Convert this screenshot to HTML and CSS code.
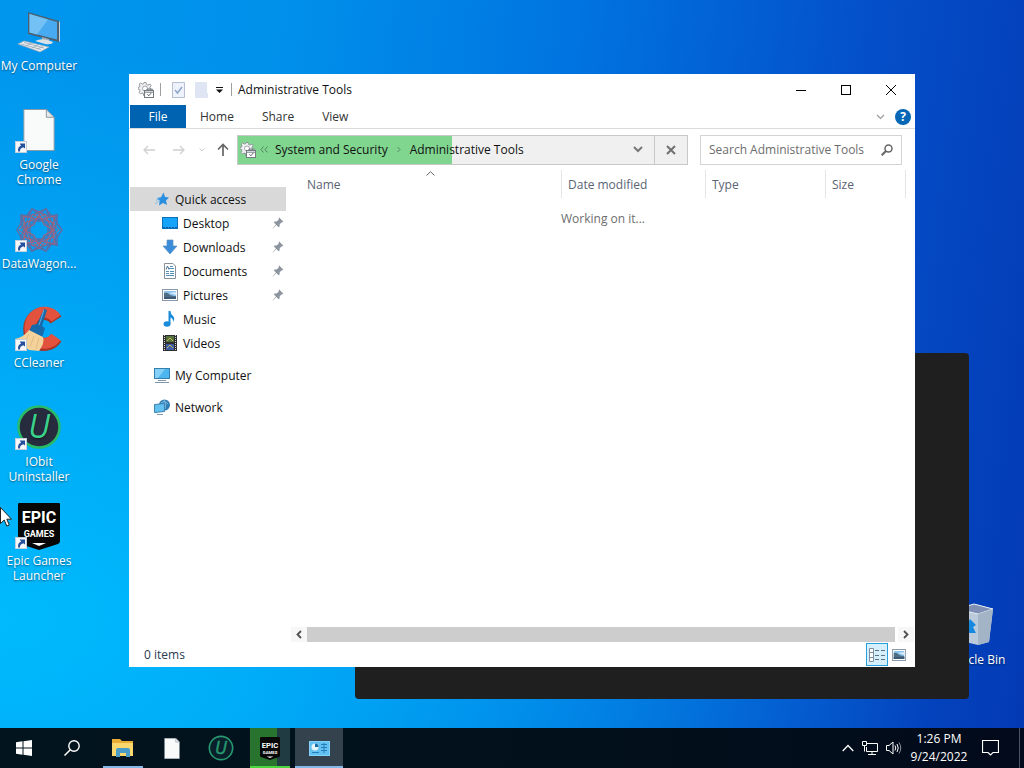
FILE: index.html
```html
<!DOCTYPE html>
<html lang="en">
<head>
    <meta charset="UTF-8">
    <meta name="viewport" content="width=device-width, initial-scale=1.0">
    <title>Administrative Tools</title>
    <link rel="stylesheet" href="styles.css">
</head>
<body>
    <!-- shared icons -->
    <svg class="defs" aria-hidden="true">
        <symbol id="shortcut" viewBox="0 0 12 12">
            <rect x="0.5" y="0.5" width="11" height="11" fill="#f6f8fb" stroke="#c3cfdb"/>
            <path d="M3.2 10.4C2.6 7.4 3.6 5.6 6 4.7L4.8 2.4H10V7.6L8.2 6.3C6 7 4.8 8.4 5 10.4Z" fill="#24509c"/>
        </symbol>
        <symbol id="gear" viewBox="0 0 16 16">
            <path d="M6 0.500H8L8.500 2.500L10 3L12 2L13 3.500L12 5.500L12.500 7H14.500V8H6.500V14L5.500 13.500V11.500L4 11L2.500 12L1 10.500L2 9L1.500 7.500L0 7V5.500L1.500 5L2 4L1.200 2L2.500 1L4.500 2L5.500 1.800Z" fill="#eff0f1" stroke="#8b9197" stroke-width="0.9"/>
            <circle cx="7" cy="6.500" r="2.500" fill="#fff" stroke="#8b9197" stroke-width="0.8"/>
            <rect x="6.5" y="8.5" width="9" height="7" fill="#fff" stroke="#737a80"/>
            <path d="M9 8V7H13V8M6.5 10.2H15.5" fill="none" stroke="#737a80"/>
            <path d="M9.4 12.2L10.8 13.8L13.4 10.8" fill="none" stroke="#60666c"/>
        </symbol>
        <symbol id="page" viewBox="0 0 32 43">
            <path d="M0.5 0.5H23.5L31.5 8.5V42.5H0.5Z" fill="#f9fafa" stroke="#8b9aa5"/>
            <path d="M23.5 0.5V8.5H31.5Z" fill="#e4e9ec" stroke="#8b9aa5"/>
        </symbol>
        <symbol id="pin" viewBox="0 0 12 12">
            <path d="M7.2 0.6L11.4 4.8L10.2 5.4L9.6 5.2L7.6 7.4L7.6 9.4L6.6 10.2L4.4 8L0.8 11.4L0.6 11.2L4 7.6L1.8 5.4L2.6 4.4L4.6 4.4L6.8 2.4L6.6 1.8Z" fill="#8c959d"/>
        </symbol>
        <symbol id="picture" viewBox="0 0 16 12">
            <rect x="0.5" y="0.5" width="15" height="11" fill="#fff" stroke="#8b98a5"/>
            <rect x="2" y="2" width="12" height="8" fill="#8dc4ee"/>
            <path d="M2 4Q5 3 7 5T14 7V10H2Z" fill="#4e6e83"/>
            <path d="M2 8H14V10H2Z" fill="#3a5a78"/>
            <path d="M7 4L14 3V6Z" fill="#d7ebf8"/>
        </symbol>
        <symbol id="shield" viewBox="0 0 42 48">
            <path d="M3 0H39Q42 0 42 3V39Q42 41 40 42L21 48L2 42Q0 41 0 39V3Q0 0 3 0Z" fill="#070707"/>
            <path d="M14 41H28L21 44Z" fill="#fff"/>
        </symbol>
    </svg>

    <main class="desktop">
        <div class="shortcuts">
            <a class="shortcut" href="#">
                <svg class="shortcut-icon" viewBox="0 0 48 48">
                    <path d="M13 4L44 13V34L13 26Z" fill="#4c6070"/>
                    <path d="M14.500 6L42 14V31.500L14.500 24.500Z" fill="#48aaf0"/>
                    <path d="M14.500 6L33 11.500L22 26.400L14.500 24.500Z" fill="#74c2f5"/>
                    <path d="M44 13L45 14V33L44 34Z" fill="#c5d0d8"/>
                    <path d="M27 29L34 31V34L27 32Z" fill="#9eacb7"/>
                    <path d="M20 33Q28 29 38 34Q37 37 30 36Z" fill="#d9e1e7"/>
                    <path d="M3 36L9 33L34 39L25 44Z" fill="#e7ecf0" stroke="#9ba9b5" stroke-width="0.7"/>
                    <path d="M6 36L26 41.500M9 34.500L29 40M11 38L17 35M17 40L23 37M22 41L28 38.500" stroke="#9ba9b5" stroke-width="0.8"/>
                </svg>
                <span class="shortcut-label">My Computer</span>
            </a>
            <a class="shortcut" href="#">
                <svg class="shortcut-icon" viewBox="0 0 48 48">
                    <use href="#page" x="8" y="2" width="32" height="42"/>
                    <use href="#shortcut" x="0" y="34" width="12" height="12"/>
                </svg>
                <span class="shortcut-label">Google<br>Chrome</span>
            </a>
            <a class="shortcut" href="#">
                <svg class="shortcut-icon" viewBox="0 0 48 48">
                    <g fill="none" stroke="#5b6ea6" stroke-width="1.500">
                        <path d="M17 3L24 8L31 3L34 10L42 9V17L47 24L42 31V39L34 38L31 45L24 40L17 45L14 38L6 39V31L2 24L6 17V9L14 10Z"/>
                        <path d="M17 3L34 10L42 31L31 45L14 38L6 17Z"/>
                        <path d="M31 3L14 10L6 31L17 45L34 38L42 17Z"/>
                        <path d="M6 9L24 14L42 9L35 24L42 39L24 34L6 39L13 24Z"/>
                        <rect x="15" y="15" width="18" height="18"/>
                        <rect x="15" y="15" width="18" height="18" transform="rotate(45 24 24)"/>
                    </g>
                    <g fill="none" stroke="#a4637d" stroke-width="1">
                        <path d="M24 5L30 12L40 10L38 19L44 24L38 29L40 38L30 36L24 43L18 36L8 38L10 29L4 24L10 19L8 10L18 12Z"/>
                        <path d="M24 8L29 19L40 24L29 29L24 40L19 29L8 24L19 19Z"/>
                        <rect x="12" y="12" width="24" height="24" transform="rotate(22 24 24)"/>
                        <rect x="12" y="12" width="24" height="24" transform="rotate(67 24 24)"/>
                    </g>
                    <use href="#shortcut" x="0" y="34" width="12" height="12"/>
                </svg>
                <span class="shortcut-label">DataWagon...</span>
            </a>
            <a class="shortcut" href="#">
                <svg class="shortcut-icon" viewBox="0 0 48 48">
                    <path d="M41 15A14.500 15.500 0 1 0 41 33" fill="none" stroke="#a93225" stroke-width="13"/>
                    <path d="M41 13.500A14.500 15.500 0 1 0 41 32" fill="none" stroke="#e2523d" stroke-width="11"/>
                    <path d="M29 4L32 5L27 21L30 23L27 33L14 26L17 20L22 19Z" fill="#1769a9"/>
                    <path d="M29 5L24 20" stroke="#5cabe0"/>
                    <path d="M14 25L28 32Q30 38 24 46L14 45L0 34Q9 32 14 25Z" fill="#f3d29b"/>
                    <path d="M14 29L9 39M19 31L15 42M24 33L21 44" stroke="#e2bd82"/>
                    <use href="#shortcut" x="0" y="34" width="12" height="12"/>
                </svg>
                <span class="shortcut-label">CCleaner</span>
            </a>
            <a class="shortcut" href="#">
                <svg class="shortcut-icon" viewBox="0 0 48 48">
                    <circle cx="24" cy="23" r="20.500" fill="#262c3d" stroke="#29ba6a" stroke-width="2.500"/>
                    <text class="iobit-u" x="24" y="34" text-anchor="middle" fill="#3bd28c">U</text>
                    <use href="#shortcut" x="0" y="34" width="12" height="12"/>
                </svg>
                <span class="shortcut-label">IObit<br>Uninstaller</span>
            </a>
            <a class="shortcut" href="#">
                <svg class="shortcut-icon" viewBox="0 0 48 48">
                    <use href="#shield" x="3" y="-1" width="42" height="48"/>
                    <text class="epic-big" x="24" y="20" text-anchor="middle" fill="#fff">EPIC</text>
                    <text class="epic-small" x="24" y="34" text-anchor="middle" fill="#fff">GAMES</text>
                    <use href="#shortcut" x="0" y="34" width="12" height="12"/>
                </svg>
                <span class="shortcut-label">Epic Games<br>Launcher</span>
            </a>
        </div>

        <a class="shortcut recycle" href="#">
            <svg class="shortcut-icon" viewBox="0 0 48 48">
                <path d="M7 7L24 2L43 7L39 40L28 43L11 39Z" fill="#bccbdc"/>
                <path d="M7 7L24 2L43 7L28 12Z" fill="#7f90b4" stroke="#e6edf5"/>
                <path d="M28 12L43 7L39 40L28 43Z" fill="#a3b4c7"/>
                <path d="M15 27L20 17L26 23L23 25L26 31H18Z" fill="#1688df"/>
            </svg>
            <span class="shortcut-label">Recycle Bin</span>
        </a>

        <div class="back-window"></div>

        <section class="window">
            <header class="titlebar">
                <svg class="icon16" viewBox="0 0 16 16"><use href="#gear"/></svg>
                <span class="divider"></span>
                <button class="quick" aria-label="Properties">
                    <svg width="13" height="16" viewBox="0 0 13 16">
                        <path d="M0.5 0.5H12.5V15.5H0.5Z" fill="#eef3fb" stroke="#b5bfd1"/>
                        <path d="M3 8L5.500 11L10 5" fill="none" stroke="#8ea5ca" stroke-width="1.500"/>
                    </svg>
                </button>
                <button class="quick" aria-label="New folder">
                    <svg width="13" height="16" viewBox="0 0 13 16">
                        <path d="M0 0H12V11H13V16H0Z" fill="#dfe5f2"/>
                    </svg>
                </button>
                <button class="quick quick-menu" aria-label="Customize toolbar">
                    <svg width="7" height="6" viewBox="0 0 7 6"><path d="M0 0.500H7" stroke="#111"/><path d="M0 2.500H7L3.500 6Z" fill="#111"/></svg>
                </button>
                <span class="divider"></span>
                <h1 class="title">Administrative Tools</h1>
                <div class="caption">
                    <button aria-label="Minimize"><svg width="10" height="10" viewBox="0 0 10 10"><path d="M0 5.500H10" stroke="#000"/></svg></button>
                    <button aria-label="Maximize"><svg width="10" height="10" viewBox="0 0 10 10"><rect x="0.500" y="0.500" width="9" height="9" fill="none" stroke="#000"/></svg></button>
                    <button aria-label="Close"><svg width="10" height="10" viewBox="0 0 10 10"><path d="M0 0L10 10M10 0L0 10" stroke="#000"/></svg></button>
                </div>
            </header>

            <nav class="ribbon">
                <button class="tab tab-file">File</button>
                <button class="tab">Home</button>
                <button class="tab">Share</button>
                <button class="tab">View</button>
                <button class="expand" aria-label="Expand the ribbon">
                    <svg width="9" height="6" viewBox="0 0 9 6"><path d="M1 1L4.500 4.500L8 1" fill="none" stroke="#999" stroke-width="1.200"/></svg>
                </button>
                <button class="help">?</button>
            </nav>

            <div class="toolbar">
                <div class="history">
                    <button aria-label="Back"><svg width="12" height="10" viewBox="0 0 12 10"><path d="M12 5H1M5 1L1 5L5 9" fill="none" stroke="#d0d0d0" stroke-width="1.300"/></svg></button>
                    <button aria-label="Forward"><svg width="12" height="10" viewBox="0 0 12 10"><path d="M0 5H11M7 1L11 5L7 9" fill="none" stroke="#d0d0d0" stroke-width="1.300"/></svg></button>
                    <button class="recent" aria-label="Recent locations"><svg width="6" height="4" viewBox="0 0 6 4"><path d="M0.500 0.500L3 3L5.500 0.500" fill="none" stroke="#ccc"/></svg></button>
                    <button class="up" aria-label="Up"><svg width="12" height="13" viewBox="0 0 12 13"><path d="M6 13V2M1 6.500L6 1.500L11 6.500" fill="none" stroke="#666" stroke-width="1.700"/></svg></button>
                </div>
                <div class="address">
                    <div class="path">
                        <div class="loading" style="width: 51.4%"></div>
                        <svg class="icon16" viewBox="0 0 16 16"><use href="#gear"/></svg>
                        <span class="chevrons"><svg width="8" height="7" viewBox="0 0 8 7"><path d="M3.500 0.500L1 3.500L3.500 6.500M7.500 0.500L5 3.500L7.500 6.500" fill="none" stroke="#548863"/></svg></span>
                        <a href="#">System and Security</a>
                        <svg class="crumb-sep" width="4" height="7" viewBox="0 0 4 7"><path d="M0.500 1L3 3.500L0.500 6" fill="none" stroke="#548863"/></svg>
                        <a href="#">Administrative Tools</a>
                        <button class="path-drop" aria-label="Previous locations"><svg width="10" height="7" viewBox="0 0 10 7"><path d="M1 1L5 5L9 1" fill="none" stroke="#777" stroke-width="2"/></svg></button>
                    </div>
                    <button class="stop" aria-label="Stop"><svg width="10" height="10" viewBox="0 0 10 10"><path d="M1 1L9 9M9 1L1 9" stroke="#707070" stroke-width="2"/></svg></button>
                </div>
                <div class="search">
                    <input type="text" placeholder="Search Administrative Tools" aria-label="Search Administrative Tools">
                    <svg width="12" height="12" viewBox="0 0 12 12"><circle cx="7.500" cy="4.500" r="3.500" fill="none" stroke="#666" stroke-width="1.500"/><path d="M5 7L0.700 11.300" stroke="#666" stroke-width="2"/></svg>
                </div>
            </div>

            <div class="content">
                <aside class="sidebar">
                    <a class="place place-top selected" href="#">
                        <svg class="icon16" viewBox="0 0 16 16">
                            <path d="M9.500 1.500L11 6L15 6.500L12 9.500L13 14L9 12L5 14.500L5.600 10L3 7L7 6.200Z" fill="#2b8fe0"/>
                            <path d="M1 13L6 9M2 9.500L5 7.500" stroke="#79bdec"/>
                        </svg>
                        Quick access
                    </a>
                    <a class="place" href="#">
                        <svg class="icon16" viewBox="0 0 16 16"><rect x="0.500" y="2.500" width="15" height="11" fill="#16a3fa" stroke="#0b71bc"/><path d="M1 12.500H15" stroke="#075b9c" stroke-dasharray="2 1"/></svg>
                        Desktop
                        <svg class="pin" viewBox="0 0 12 12"><use href="#pin"/></svg>
                    </a>
                    <a class="place" href="#">
                        <svg class="icon16" viewBox="0 0 16 16"><path d="M5 1H11V7H15L8 15L1 7H5Z" fill="#3a8dda" stroke="#5f91bd" stroke-width="0.700"/></svg>
                        Downloads
                        <svg class="pin" viewBox="0 0 12 12"><use href="#pin"/></svg>
                    </a>
                    <a class="place" href="#">
                        <svg class="icon16" viewBox="0 0 16 16"><path d="M2.500 0.500H11L13.500 3V15.500H2.500Z" fill="#fff" stroke="#87919a"/><path d="M8 3.500H11M7 5.500H12M4 8.500H7M8 8.500H12M4 10.500H7M8 10.500H12M4 12.500H12" stroke="#4e91bd"/><path d="M4 6.500L5.500 3L7 6.500" fill="none" stroke="#456f8e"/></svg>
                        Documents
                        <svg class="pin" viewBox="0 0 12 12"><use href="#pin"/></svg>
                    </a>
                    <a class="place" href="#">
                        <svg class="icon16" viewBox="0 0 16 16"><use href="#picture" y="2" width="16" height="12"/></svg>
                        Pictures
                        <svg class="pin" viewBox="0 0 12 12"><use href="#pin"/></svg>
                    </a>
                    <a class="place" href="#">
                        <svg class="icon16" viewBox="0 0 16 16"><ellipse cx="5" cy="13" rx="3.500" ry="2.700" fill="#1b8bdc"/><path d="M6.500 0H8.500Q8.500 3 11 5Q13.500 7.500 11 11Q11.500 7.500 8.500 6.500V13H6.500Z" fill="#1b8bdc"/></svg>
                        Music
                    </a>
                    <a class="place" href="#">
                        <svg class="icon16" viewBox="0 0 16 16"><rect x="1" y="0" width="14" height="16" fill="#2d2d32"/><path d="M2.500 0V16M13.500 0V16" stroke="#dcdcd2" stroke-dasharray="1 1"/><rect x="4" y="1" width="8" height="6" fill="#55713c"/><rect x="4" y="9" width="8" height="6" fill="#3e5da5"/><path d="M5 6L8 3L11 6M5 13L8 10L11 13" stroke="#c6b859" fill="none"/></svg>
                        Videos
                    </a>
                    <a class="place place-top" href="#">
                        <svg class="icon16" viewBox="0 0 16 16"><rect x="0.500" y="1.500" width="15" height="10" fill="#4eb6ef" stroke="#357fae"/><path d="M1 2H11L4 11H1Z" fill="#85d0f7"/><path d="M1 15.500H15M4 13.500H12" stroke="#7c98aa"/></svg>
                        My Computer
                    </a>
                    <a class="place place-top" href="#">
                        <svg class="icon16" viewBox="0 0 16 16"><circle cx="10.500" cy="6" r="5.500" fill="#307db6"/><path d="M7 4Q11 1 14 5M10 1Q13 5 11 10" stroke="#83bce1" fill="none"/><path d="M0.500 5.500L10.500 4.500V12.500L0.500 13.500Z" fill="#62c1f1" stroke="#3e82ad"/><path d="M3 15.500H9" stroke="#7c98aa"/></svg>
                        Network
                    </a>
                </aside>

                <div class="files">
                    <table class="columns">
                        <thead>
                            <tr>
                                <th class="col-name">Name
                                    <svg class="sort" width="9" height="5" viewBox="0 0 9 5"><path d="M0.500 4.500L4.500 0.700L8.500 4.500" fill="none" stroke="#666"/></svg>
                                </th>
                                <th class="col-date">Date modified</th>
                                <th class="col-type">Type</th>
                                <th class="col-size">Size</th>
                            </tr>
                        </thead>
                    </table>
                    <p class="working">Working on it...</p>
                    <div class="scrollbar">
                        <button aria-label="Scroll left"><svg width="6" height="9" viewBox="0 0 6 9"><path d="M5 1L1.500 4.500L5 8" fill="none" stroke="#505050" stroke-width="1.800"/></svg></button>
                        <div class="thumb"></div>
                        <button aria-label="Scroll right"><svg width="6" height="9" viewBox="0 0 6 9"><path d="M1 1L4.500 4.500L1 8" fill="none" stroke="#505050" stroke-width="1.800"/></svg></button>
                    </div>
                </div>
            </div>

            <footer class="status">
                <span>0 items</span>
                <div class="views">
                    <button class="view view-on" aria-label="Details">
                        <svg width="16" height="14" viewBox="0 0 16 14"><path d="M0.500 0.500H4.500V13.500H0.500ZM0.500 4.500H4.500M0.500 9.500H4.500" fill="#fff" stroke="#7d8fa0"/><path d="M6 2.500H10M12 2.500H16M6 7.500H10M12 7.500H16M6 11.500H10M12 11.500H16" stroke="#5d7284"/></svg>
                    </button>
                    <button class="view" aria-label="Large icons">
                        <svg width="14" height="12" viewBox="0 0 16 12" preserveAspectRatio="none"><use href="#picture" width="16" height="12"/></svg>
                    </button>
                </div>
            </footer>
        </section>

        <svg class="cursor" viewBox="0 0 12 20"><path d="M0.500 0.500V16.500L4.200 13L6.800 19L9.300 18L6.800 12.200H11.500Z" fill="#fff" stroke="#222"/></svg>
    </main>

    <footer class="taskbar">
        <button class="task" aria-label="Start">
            <svg width="16" height="16" viewBox="0 0 16 16"><path d="M0 2.300L6.500 1.300V7.500H0ZM7.500 1.200L16 0V7.500H7.500ZM0 8.500H6.500V14.700L0 13.700ZM7.500 8.500H16V16L7.500 14.800Z" fill="#fff"/></svg>
        </button>
        <button class="task" aria-label="Search">
            <svg width="16" height="16" viewBox="0 0 16 16"><circle cx="10" cy="6" r="5.200" fill="none" stroke="#fff" stroke-width="1.400"/><path d="M6.300 9.700L0.500 15.500" stroke="#fff" stroke-width="1.500"/></svg>
        </button>
        <div class="apps">
            <button class="task open" aria-label="File Explorer">
                <svg width="22" height="20" viewBox="0 0 22 20"><path d="M0 1H8L10 3H21V18H0Z" fill="#e9ae35"/><path d="M0 5H21V18H0Z" fill="#fbd86d"/><path d="M4 12Q4 10 6 10H16Q18 10 18 12V19H14V15H8V19H4Z" fill="#4a9cc9"/></svg>
            </button>
            <button class="task" aria-label="Google Chrome">
                <svg width="16" height="21" viewBox="0 0 32 43"><use href="#page"/></svg>
            </button>
            <button class="task" aria-label="IObit Uninstaller">
                <svg width="26" height="26" viewBox="0 0 48 48"><circle cx="24" cy="24" r="21.500" fill="#09202a" stroke="#279970" stroke-width="3"/><text class="iobit-u" x="24" y="35" text-anchor="middle" fill="#279970" stroke="#279970">U</text></svg>
            </button>
            <button class="task epic-task" aria-label="Epic Games Launcher">
                <svg width="20" height="23" viewBox="0 0 42 48"><use href="#shield"/><text class="epic-big" x="21" y="22" text-anchor="middle" fill="#fff">EPIC</text><text class="epic-small" x="21" y="35" text-anchor="middle" fill="#fff">GAMES</text></svg>
            </button>
            <button class="task active" aria-label="Administrative Tools">
                <svg width="21" height="15" viewBox="0 0 21 15"><rect x="0.500" y="0.500" width="20" height="14" fill="#63c0f0" stroke="#83d3f8"/><circle cx="6" cy="6" r="3.500" fill="#e5f5fd"/><path d="M6 6V2.500A3.500 3.500 0 0 1 9.500 6Z" fill="#1a6ca8"/><path d="M12 3.500H18M12 6.500H18M12 9.500H18M3 11.500H10M15 2V12" stroke="#247fbd"/></svg>
            </button>
        </div>
        <div class="tray">
            <svg width="12" height="8" viewBox="0 0 12 8"><path d="M0.700 7L6 1.500L11.300 7" fill="none" stroke="#fff" stroke-width="1.300"/></svg>
            <svg width="16" height="14" viewBox="0 0 16 14"><path d="M5 2.500H15.500V10.500H4.500V6M10 11V13M6 13.500H14M0.500 0.500H4.500V4.500H0.500ZM2.500 5V10.500" fill="none" stroke="#fff"/></svg>
            <svg width="16" height="14" viewBox="0 0 16 14"><path d="M0.500 4.500H3L7 1V13L3 9.500H0.500Z" fill="none" stroke="#fff"/><path d="M9 4.500Q10.500 7 9 9.500M11 3Q13.500 7 11 11" fill="none" stroke="#fff"/><path d="M13 1.500Q16.500 7 13 12.500" fill="none" stroke="#8a929b"/></svg>
            <div class="clock">1:26 PM<br>9/24/2022</div>
            <svg width="17" height="16" viewBox="0 0 17 16"><path d="M0.500 0.500H16.500V12.500H11L8.500 15L6 12.500H0.500Z" fill="none" stroke="#fff" stroke-width="1.200"/></svg>
        </div>
    </footer>
</body>
</html>
```
FILE: styles.css
```css
* {
    box-sizing: border-box;
}
body {
    margin: 0;
    height: 100vh;
    display: flex;
    flex-direction: column;
    overflow: hidden;
    font-family: "Open Sans", "Noto Sans", sans-serif;
    font-size: 12px;
    line-height: 15px;
    color: #111;
}
button {
    font: inherit;
    color: inherit;
    background: none;
    border: none;
    padding: 0;
    display: flex;
    align-items: center;
    justify-content: center;
}
a {
    color: inherit;
    text-decoration: none;
}
svg {
    flex: none;
    display: block;
}
.defs {
    position: absolute;
    width: 0;
    height: 0;
}
.icon16 {
    width: 16px;
    height: 16px;
}

/* desktop */
.desktop {
    flex: 1;
    position: relative;
    background:
        radial-gradient(ellipse at 0% 85%, rgba(0, 190, 255, 0.9), rgba(0, 180, 255, 0) 65%),
        linear-gradient(97deg, #0096ee 0%, #0091eb 25%, #0074e0 52%, #0450ca 78%, #033ab4 100%);
}
.shortcuts {
    width: 78px;
    padding-top: 8px;
}
.shortcut {
    display: flex;
    flex-direction: column;
    align-items: center;
    height: 99px;
    gap: 2px;
    color: white;
    text-align: center;
    text-shadow: 0 1px 2px rgba(0, 0, 0, 0.5);
}
.shortcut-icon {
    width: 48px;
    height: 48px;
}
.shortcut-label {
    white-space: nowrap;
}
.recycle {
    position: absolute;
    right: 12px;
    bottom: 27px;
    width: 76px;
}
.epic-big {
    font: bold 16px Roboto, sans-serif;
}
.epic-small {
    font: bold 9px Roboto, sans-serif;
}
.iobit-u {
    font: italic 32px "Open Sans", sans-serif;
}
.cursor {
    position: absolute;
    left: 0;
    top: 507px;
    width: 12px;
    height: 20px;
}

/* windows */
.back-window {
    position: absolute;
    left: 355px;
    top: 353px;
    right: 55px;
    bottom: 29px;
    background-color: #1f1f1f;
    border-radius: 4px;
}
.window {
    position: absolute;
    left: 129px;
    top: 74px;
    right: 109px;
    bottom: 61px;
    display: flex;
    flex-direction: column;
    background-color: white;
}
.titlebar {
    display: flex;
    align-items: center;
    height: 31px;
    padding-left: 9px;
}
.divider {
    width: 1px;
    height: 13px;
    margin: 0 6px;
    background-color: #a0a0a0;
}
.quick {
    width: 23px;
}
.quick-menu {
    width: 12px;
}
.title {
    margin: 0;
    font-size: 12px;
    font-weight: normal;
}
.caption {
    display: flex;
    margin-left: auto;
    padding-right: 2px;
}
.caption button {
    width: 45px;
    height: 30px;
}
.ribbon {
    display: flex;
    align-items: center;
    height: 24px;
    padding: 0 4px 0 1px;
    border-bottom: 1px solid #dadbdc;
}
.tab {
    height: 23px;
    padding: 0 14px;
    color: #333;
}
.tab-file {
    width: 56px;
    background-color: #0063b1;
    color: white;
}
.expand {
    margin-left: auto;
}
.help {
    width: 16px;
    height: 16px;
    margin-left: 10px;
    border-radius: 8px;
    background-color: #0667b7;
    color: white;
    font-weight: bold;
}

/* address row */
.toolbar {
    display: flex;
    align-items: center;
    height: 41px;
    padding-right: 13px;
}
.history {
    display: flex;
    align-items: center;
    width: 108px;
    padding-left: 5px;
}
.history button {
    width: 30px;
}
.history .recent {
    width: 15px;
}
.history .up {
    width: 28px;
}
.address {
    flex: 1;
    display: flex;
    height: 30px;
    border: 1px solid #c8c8c8;
    background-color: #f0f0f0;
}
.path {
    flex: 1;
    position: relative;
    display: flex;
    align-items: center;
    padding-left: 2px;
}
.path > * {
    position: relative;
}
.path .loading {
    position: absolute;
    left: 0;
    top: 0;
    bottom: 0;
    background-color: #80d58f;
}
.chevrons {
    padding: 0 7px 0 4px;
}
.crumb-sep {
    margin: 0 9px;
}
.path-drop {
    margin-left: auto;
    width: 32px;
    height: 28px;
}
.stop {
    width: 33px;
    border-left: 1px solid #c8c8c8;
}
.search {
    display: flex;
    align-items: center;
    width: 202px;
    height: 30px;
    margin-left: 12px;
    padding: 0 8px;
    border: 1px solid #d4d4d4;
}
.search input {
    flex: 1;
    min-width: 0;
    padding: 0;
    border: none;
    outline: none;
    background: none;
    font: inherit;
}
.search input::placeholder {
    color: #6d6d6d;
}

/* folders */
.content {
    flex: 1;
    display: flex;
    min-height: 0;
}
.sidebar {
    width: 162px;
    padding: 17px 5px 0 1px;
}
.place {
    display: flex;
    align-items: center;
    gap: 5px;
    height: 24px;
    padding: 0 2px 0 32px;
}
.place-top {
    margin-top: 8px;
    padding-left: 24px;
}
.selected {
    margin-top: 0;
    background-color: #d9d9d9;
}
.pin {
    width: 12px;
    height: 12px;
    margin-left: auto;
}
.files {
    flex: 1;
    display: flex;
    flex-direction: column;
    min-width: 0;
}
.columns {
    table-layout: fixed;
    border-collapse: collapse;
    width: calc(100% - 9px);
}
.columns th {
    height: 28px;
    padding: 0 6px;
    border-right: 1px solid #e5e5e5;
    color: #5a6473;
    font-weight: normal;
    text-align: left;
    position: relative;
}
.columns .col-name {
    padding-left: 16px;
}
.col-date {
    width: 144px;
}
.col-type {
    width: 120px;
}
.col-size {
    width: 80px;
}
.sort {
    position: absolute;
    left: 50%;
    top: 1px;
}
.working {
    flex: 1;
    margin: 13px 0 0;
    color: #6d6d6d;
    text-align: center;
}
.scrollbar {
    display: flex;
    height: 15px;
    margin-right: 1px;
}
.scrollbar button {
    width: 16px;
    background-color: #f7f7f7;
}
.thumb {
    flex: 1;
    margin-right: 3px;
    background-color: #cdcdcd;
}
.status {
    display: flex;
    align-items: center;
    justify-content: space-between;
    height: 25px;
    padding: 0 5px 0 15px;
    color: #2b3a52;
}
.views {
    display: flex;
}
.view {
    width: 22px;
    height: 23px;
}
.view-on {
    border: 1px solid #26a0da;
    background-color: #d5effc;
}

/* taskbar */
.taskbar {
    display: flex;
    height: 40px;
    background: linear-gradient(90deg, #02141e, #02101b 60%, #020a1b);
    color: white;
}
.task {
    width: 48px;
    height: 40px;
}
.apps {
    display: flex;
    gap: 1px;
    margin-left: 3px;
}
.open {
    background: linear-gradient(#84b8e8, #84b8e8) center bottom / 40px 2px no-repeat;
}
.epic-task {
    width: 40px;
    margin: 0 4px;
    border-bottom: 2px solid #4bd640;
    background: linear-gradient(90deg, #28742f 27px, #203c42 27px);
    padding-top: 2px;
}
.active {
    border-bottom: 2px solid #84b8e8;
    background-color: #33424d;
    padding-top: 2px;
}
.tray {
    display: flex;
    align-items: center;
    gap: 8px;
    margin-left: auto;
    margin-right: 4px;
    padding-right: 20px;
    border-right: 1px solid #4b5360;
}
.clock {
    width: 58px;
    margin-right: 6px;
    text-align: center;
    line-height: 18px;
}
```
